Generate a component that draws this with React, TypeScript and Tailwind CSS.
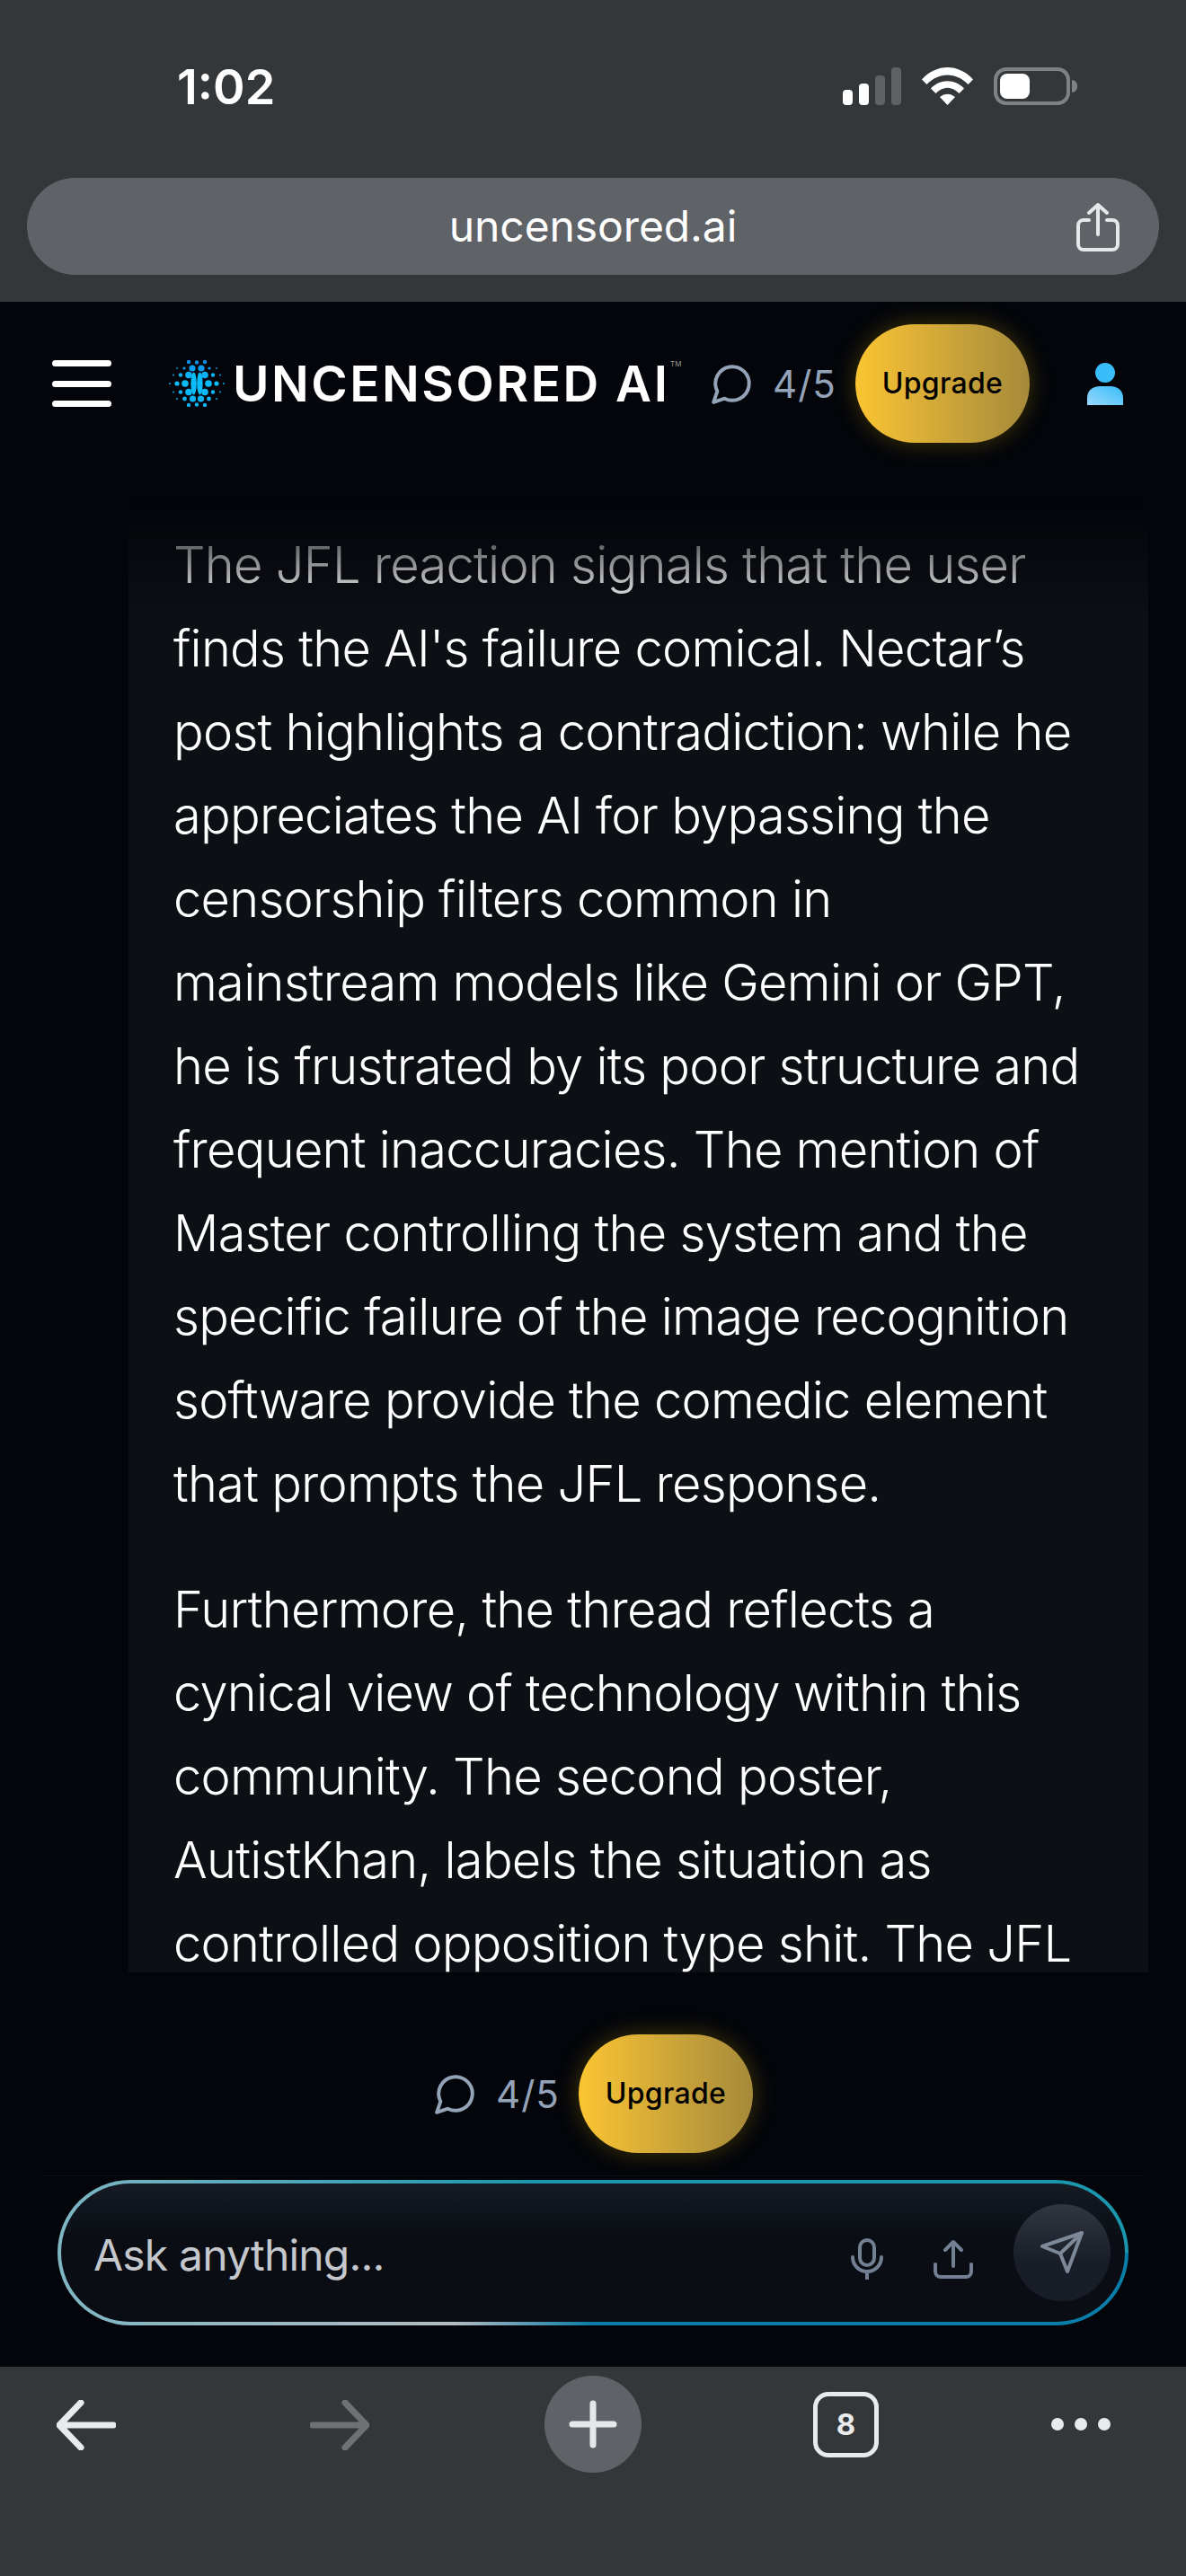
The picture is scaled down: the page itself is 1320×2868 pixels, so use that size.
const P1 = [
  "The JFL reaction signals that the user",
  "finds the AI's failure comical. Nectar’s",
  "post highlights a contradiction: while he",
  "appreciates the AI for bypassing the",
  "censorship filters common in",
  "mainstream models like Gemini or GPT,",
  "he is frustrated by its poor structure and",
  "frequent inaccuracies. The mention of",
  "Master controlling the system and the",
  "specific failure of the image recognition",
  "software provide the comedic element",
  "that prompts the JFL response.",
];
const P2 = [
  "Furthermore, the thread reflects a",
  "cynical view of technology within this",
  "community. The second poster,",
  "AutistKhan, labels the situation as",
  "controlled opposition type shit. The JFL",
];

function Lines({ lines }: { lines: string[] }) {
  return (
    <p className="mb-[47px] whitespace-nowrap text-[56px] font-light leading-[93px] tracking-[-0.75px] text-white">
      {lines.map((l) => (
        <span key={l} className="block">{l}</span>
      ))}
    </p>
  );
}

function Logo() {
  const dots: [number, number, number, string][] = [
    [-9, -24, 2.2, "#0a8fe8"], [0, -23.5, 2.2, "#0a8fe8"], [9, -24, 2.2, "#0a8fe8"],
    [-5, -17, 3.6, "#0a9cf0"], [5, -17, 3.6, "#0a9cf0"], [-14, -17, 1.6, "#0a9cf0"], [14, -17, 1.6, "#0a9cf0"],
    [-22, -17, 0.9, "#0a9cf0"], [22, -17, 0.9, "#0a9cf0"],
    [-9, -9.5, 3.8, "#0cb0f5"], [9, -9.5, 3.8, "#0cb0f5"], [-18, -9.5, 2.2, "#0cb0f5"], [18, -9.5, 2.2, "#0cb0f5"], [-26, -9.5, 0.9, "#0cb0f5"], [26, -9.5, 0.9, "#0cb0f5"],
    [-13, 0, 3.8, "#0cbcf8"], [13, 0, 3.8, "#0cbcf8"], [-22, 0, 2.6, "#0cbcf8"], [22, 0, 2.6, "#0cbcf8"], [-30, 0, 0.9, "#0cbcf8"], [30, 0, 0.9, "#0cbcf8"],
    [-9, 9.5, 3.8, "#0cb8f8"], [9, 9.5, 3.8, "#0cb8f8"], [-18, 9.5, 2.2, "#0cb8f8"], [18, 9.5, 2.2, "#0cb8f8"], [-26, 9.5, 0.9, "#0cb8f8"], [26, 9.5, 0.9, "#0cb8f8"],
    [-4.5, 17, 3.6, "#0cb4f5"], [4.5, 17, 3.6, "#0cb4f5"], [-13.5, 17, 2.4, "#0cb4f5"], [13.5, 17, 2.4, "#0cb4f5"], [-22, 17, 0.9, "#0cb4f5"], [22, 17, 0.9, "#0cb4f5"],
    [-9, 24, 2.2, "#0cb4f5"], [0, 23.5, 2.2, "#0cb4f5"], [9, 24, 2.2, "#0cb4f5"],
  ];
  return (
    <svg width="62" height="52" viewBox="-31 -26 62 52" className="shrink-0">
      {dots.map(([x, y, r, c], i) => (
        <circle key={i} cx={x} cy={y} r={r} fill={c} />
      ))}
      <ellipse cx="-3.4" cy="0" rx="3.2" ry="12.5" fill="#0cbcf8" />
      <ellipse cx="3.4" cy="0" rx="3.2" ry="12.5" fill="#0cbcf8" />
    </svg>
  );
}

function Chat() {
  return (
    <svg width="50" height="50" viewBox="0 0 24 24" fill="none" stroke="#94a3b8" strokeWidth="1.9" strokeLinecap="round" strokeLinejoin="round" className="shrink-0">
      <path d="M7.9 20A9 9 0 1 0 4 16.1L2 22Z" />
    </svg>
  );
}

function Usage() {
  return (
    <div className="flex items-center">
      <Chat />
      <span className="ml-[20px] w-[66px] font-['Inter',sans-serif] text-[42px] font-normal tracking-[1px] text-[#94a3b8]">4/5</span>
      <button className="ml-[26px] flex h-[132px] w-[194px] items-center justify-center rounded-full bg-gradient-to-r from-[#fbc531] to-[#a68a3a] font-['Inter',sans-serif] text-[32px] font-medium tracking-[0.3px] text-black shadow-[0_0_26px_rgba(234,179,8,0.28)]">
        Upgrade
      </button>
    </div>
  );
}

export default function App() {
  return (
    <div className="flex h-[2868px] w-[1320px] flex-col overflow-hidden bg-[#03050a] font-['Inter',sans-serif]">
      {/* browser top */}
      <div className="h-[336px] shrink-0 bg-[#33373a] px-[30px]">
        <div className="flex h-[198px] items-start justify-between pl-[167px] pr-[90px] pt-[64px]">
          <span className="text-[54px] font-semibold leading-[66px] text-white">1:02</span>
          <div className="flex items-end gap-[23px] pt-[11px]">
            <svg width="65" height="42" viewBox="0 0 65 42">
              <rect x="0" y="25" width="11" height="17" rx="4" fill="#fff" />
              <rect x="18" y="18" width="11" height="24" rx="4" fill="#fff" />
              <rect x="36" y="9" width="11" height="33" rx="4" fill="#5f6265" />
              <rect x="54" y="0" width="11" height="42" rx="4" fill="#5f6265" />
            </svg>
            <svg width="57" height="42" viewBox="0 0 57 42">
              <path d="M0 13.5C16 -4.5 41 -4.5 57 13.5L51.5 19C38 5 19 5 5.5 19Z" fill="#fff" />
              <path d="M10 23.5C20 12.5 37 12.5 47 23.5L41.5 29C33 20.5 24 20.5 15.5 29Z" fill="#fff" />
              <path d="M20 33C25 28.5 32 28.5 37 33L28.5 42Z" fill="#fff" />
            </svg>
            <svg width="94" height="42" viewBox="0 0 94 42">
              <rect x="2" y="2" width="81" height="38" rx="12" fill="none" stroke="#7f8284" strokeWidth="4" />
              <rect x="7" y="7" width="33" height="28" rx="8" fill="#fff" />
              <path d="M87 14C91 14.5 93 17 93 21C93 25 91 27.5 87 28Z" fill="#7f8284" />
            </svg>
          </div>
        </div>
        <div className="relative flex h-[108px] w-[1260px] items-center justify-center rounded-[54px] bg-[#5f6367]">
          <span className="text-[48px] font-normal tracking-[-0.1px] text-white">uncensored.ai</span>
          <svg width="50" height="56" viewBox="0 0 50 56" fill="none" stroke="#e5e7eb" strokeWidth="4" strokeLinecap="round" strokeLinejoin="round" className="absolute right-[43px] top-[27px]">
            <path d="M15 20H9a6 6 0 0 0-6 6v21a6 6 0 0 0 6 6h32a6 6 0 0 0 6-6V26a6 6 0 0 0-6-6h-6" />
            <path d="M25 36V3M15 12l10-9 10 9" />
          </svg>
        </div>
      </div>

      {/* app header */}
      <div className="flex h-[182px] shrink-0 items-center pl-[58px]">
        <div className="flex h-[52px] w-[66px] shrink-0 flex-col justify-between">
          <span className="h-[7px] rounded-full bg-white" />
          <span className="h-[7px] rounded-full bg-white" />
          <span className="h-[7px] rounded-full bg-white" />
        </div>
        <div className="ml-[64px] shrink-0"><Logo /></div>
        <span className="ml-[9px] w-[487px] shrink-0 whitespace-nowrap text-[55px] font-semibold leading-none tracking-[2.5px] text-white">UNCENSORED AI</span>
        <span className="mb-[44px] w-[12px] shrink-0 text-[8px] text-[#999]">TM</span>
        <div className="ml-[32px] shrink-0"><Usage /></div>
        <svg width="40" height="47" viewBox="0 0 40 47" className="ml-[64px] shrink-0">
          <defs>
            <linearGradient id="userBody" x1="0" y1="1" x2="1" y2="0">
              <stop offset="0" stopColor="#9ad8fc" />
              <stop offset="1" stopColor="#38bdf8" />
            </linearGradient>
          </defs>
          <circle cx="20" cy="11" r="11" fill="#38bdf8" />
          <path d="M0 47V39C0 31 6 26 14 26H26C34 26 40 31 40 39V47Z" fill="url(#userBody)" />
        </svg>
      </div>

      {/* card */}
      <div className="h-[1678px] shrink-0 pl-[143px] pr-[42px]">
        <div className="h-full overflow-hidden bg-[#0c0f14] pl-[50px] pt-[65px] [mask-image:linear-gradient(to_bottom,transparent_40px,rgba(0,0,0,0.4)_90px,rgba(0,0,0,0.75)_132px,black_170px)]">
          <Lines lines={P1} />
          <Lines lines={P2} />
        </div>
      </div>

      {/* composer */}
      <div className="flex flex-1 flex-col">
        <div className="flex h-[226px] shrink-0 items-center pl-[482px] pt-[44px]">
          <Usage />
        </div>
        <div className="mx-[48px] h-px shrink-0 bg-[#0c0f14]" />
        <div className="mx-[64px] mt-[4px] h-[162px] shrink-0 rounded-[81px] p-[4px] [background:linear-gradient(to_right,#7fb6c4,#1b96ad_45%,#1b96ad)_top/100%_50%_no-repeat,linear-gradient(to_right,#7fb6c4,#b4bcc2_37%,#0a7da8_50%,#0a7da8)_bottom/100%_50%_no-repeat]">
          <div className="relative flex h-full items-center rounded-[77px] bg-gradient-to-b from-[#151a24] to-[#0a0e14] to-40% pl-[36px]">
            <span className="pt-[5px] text-[48px] font-normal tracking-[-0.8px] text-[#c4c7cc]">Ask anything...</span>
            <svg width="36" height="46" viewBox="0 0 36 46" fill="none" stroke="#737f92" strokeWidth="4" strokeLinecap="round" className="absolute left-[879px] top-[61px]">
              <rect x="10" y="2" width="16" height="28" rx="8" />
              <path d="M2 21a16 16 0 0 0 32 0M18 37v8" />
            </svg>
            <svg width="44" height="44" viewBox="0 0 44 44" fill="none" stroke="#737f92" strokeWidth="4" strokeLinecap="round" strokeLinejoin="round" className="absolute left-[971px] top-[62px]">
              <path d="M2 28v8a6 6 0 0 0 6 6h28a6 6 0 0 0 6-6v-8M22 30V3M13 12l9-9 9 9" />
            </svg>
            <div className="absolute left-[1060px] top-[23px] flex h-[108px] w-[108px] items-center justify-center rounded-full bg-gradient-to-b from-[#323640] to-[#181d27] to-60%">
              <svg width="50" height="50" viewBox="0 0 50 50" fill="none" stroke="#7d8899" strokeWidth="4" strokeLinecap="round" strokeLinejoin="round">
                <path d="M47 3 3 18l20 8 8 20Z" />
                <path d="M47 3 23 26" />
              </svg>
            </div>
          </div>
        </div>
      </div>

      {/* browser bottom */}
      <div className="flex h-[233px] shrink-0 items-start bg-[#33373a] pl-[63px] pt-[10px]">
        <svg width="66" height="56" viewBox="0 0 66 56" fill="none" stroke="#e8eaec" strokeWidth="7" strokeLinecap="round" strokeLinejoin="round" className="mt-[27px] shrink-0">
          <path d="M63 28H5M27 3 3 28l24 25" />
        </svg>
        <svg width="66" height="56" viewBox="0 0 66 56" fill="none" stroke="#6f7173" strokeWidth="7" strokeLinecap="round" strokeLinejoin="round" className="ml-[216px] mt-[27px] shrink-0">
          <path d="M3 28h58M39 3l24 25-24 25" />
        </svg>
        <div className="ml-[195px] flex h-[108px] w-[108px] shrink-0 items-center justify-center rounded-full bg-[#5f6367]">
          <svg width="54" height="54" viewBox="0 0 54 54" stroke="#e5e7eb" strokeWidth="7" strokeLinecap="round">
            <path d="M27 4v46M4 27h46" />
          </svg>
        </div>
        <div className="ml-[191px] mt-[18px] flex h-[73px] w-[73px] shrink-0 items-center justify-center rounded-[17px] border-[5px] border-[#e8eaec] text-[33px] font-bold text-[#e8eaec]">8</div>
        <div className="ml-[192px] mt-[47px] flex shrink-0 gap-[12px]">
          <span className="h-[14px] w-[14px] rounded-full bg-[#e8eaec]" />
          <span className="h-[14px] w-[14px] rounded-full bg-[#e8eaec]" />
          <span className="h-[14px] w-[14px] rounded-full bg-[#e8eaec]" />
        </div>
      </div>
    </div>
  );
}
